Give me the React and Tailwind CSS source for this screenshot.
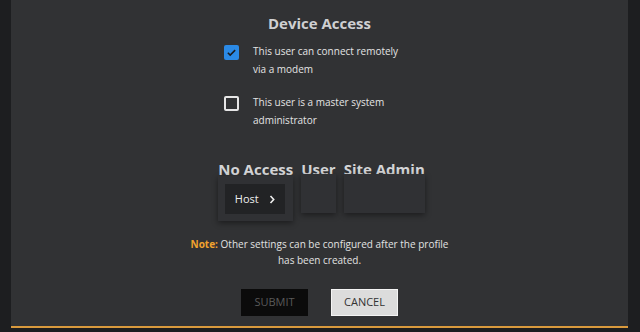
import React from "react";

const Check = ({ checked }) =>
  checked ? (
    <div className="w-[15px] h-[15px] rounded-[2px] bg-[#2b8ae6] flex items-center justify-center shrink-0">
      <svg width="11" height="11" viewBox="0 0 12 12" fill="none">
        <path d="M2 6.2l2.6 2.6L10 3.4" stroke="#1b1c1e" strokeWidth="1.7" />
      </svg>
    </div>
  ) : (
    <div className="w-[15px] h-[15px] rounded-[2px] border-2 border-[#e6e6e6] shrink-0" />
  );

const Option = ({ checked, lines }) => (
  <div className="flex items-start gap-[14px]">
    <div className="pt-[2px]">
      <Check checked={checked} />
    </div>
    <p className="text-[10px] leading-[18px] text-[#e4e4e4] -mt-[1px]">
      {lines[0]}
      <br />
      {lines[1]}
    </p>
  </div>
);

export default function App() {
  return (
    <div
      className="w-[640px] h-[332px] bg-[#1d1e20] flex"
      style={{ fontFamily: "'Open Sans', 'Liberation Sans', sans-serif" }}
    >
      <div className="w-[11px] shrink-0" />
      <div className="flex-1 h-[328px] bg-[#313234] border-b-2 border-[#d99a3d] flex flex-col items-center">
        <h2 className="mt-[12px] text-[15px] font-bold text-[#cfd0d2] leading-[22px]">Device Access</h2>
        <div className="mt-[9px] w-[200px] ml-[9px] flex flex-col gap-[16px]">
          <Option checked lines={["This user can connect remotely", "via a modem"]} />
          <Option lines={["This user is a master system", "administrator"]} />
        </div>
        <div className="mt-[30px] ml-[4px] flex gap-[8px] items-start">
          <div className="flex flex-col">
            <span className="text-[15px] font-bold text-[#d4d5d7] leading-[20px]">No Access</span>
            <div className="mt-[-3px] bg-[#303134] shadow-[0_2px_6px_rgba(0,0,0,0.45)] px-[7px] pt-[8px] pb-[7px]">
              <button className="w-[60px] h-[30px] bg-[#222325] text-[11px] text-[#eee] flex items-center justify-center gap-[10px]">
                Host
                <svg width="7" height="9" viewBox="0 0 7 9" fill="none">
                  <path d="M1.5 1l3.2 3.5L1.5 8" stroke="#eee" strokeWidth="1.6" />
                </svg>
              </button>
            </div>
          </div>
          <div className="flex flex-col">
            <span className="text-[15px] font-bold text-[#d4d5d7] leading-[20px]">User</span>
            <div className="mt-[-5px] h-[39px] bg-[#303134] shadow-[0_2px_6px_rgba(0,0,0,0.45)]" />
          </div>
          <div className="flex flex-col">
            <span className="text-[15px] font-bold text-[#d4d5d7] leading-[20px]">Site Admin</span>
            <div className="mt-[-5px] h-[39px] bg-[#303134] shadow-[0_2px_6px_rgba(0,0,0,0.45)]" />
          </div>
        </div>
        <p className="mt-[15px] w-[270px] text-center text-[10px] leading-[16px] text-[#e2e2e2]">
          <span className="font-bold text-[#f0a22e]">Note:</span> Other settings can be configured after the profile has been created.
        </p>
        <div className="mt-[21px] flex gap-[23px]">
          <button className="w-[67px] h-[27px] bg-[#0b0b0b] text-[11px] text-[#5a5a5a]">SUBMIT</button>
          <button className="w-[67px] h-[27px] bg-[#dcdcdc] border border-[#f4f4f4] text-[11px] text-[#333]">CANCEL</button>
        </div>
      </div>
      <div className="w-[12px] shrink-0" />
    </div>
  );
}
